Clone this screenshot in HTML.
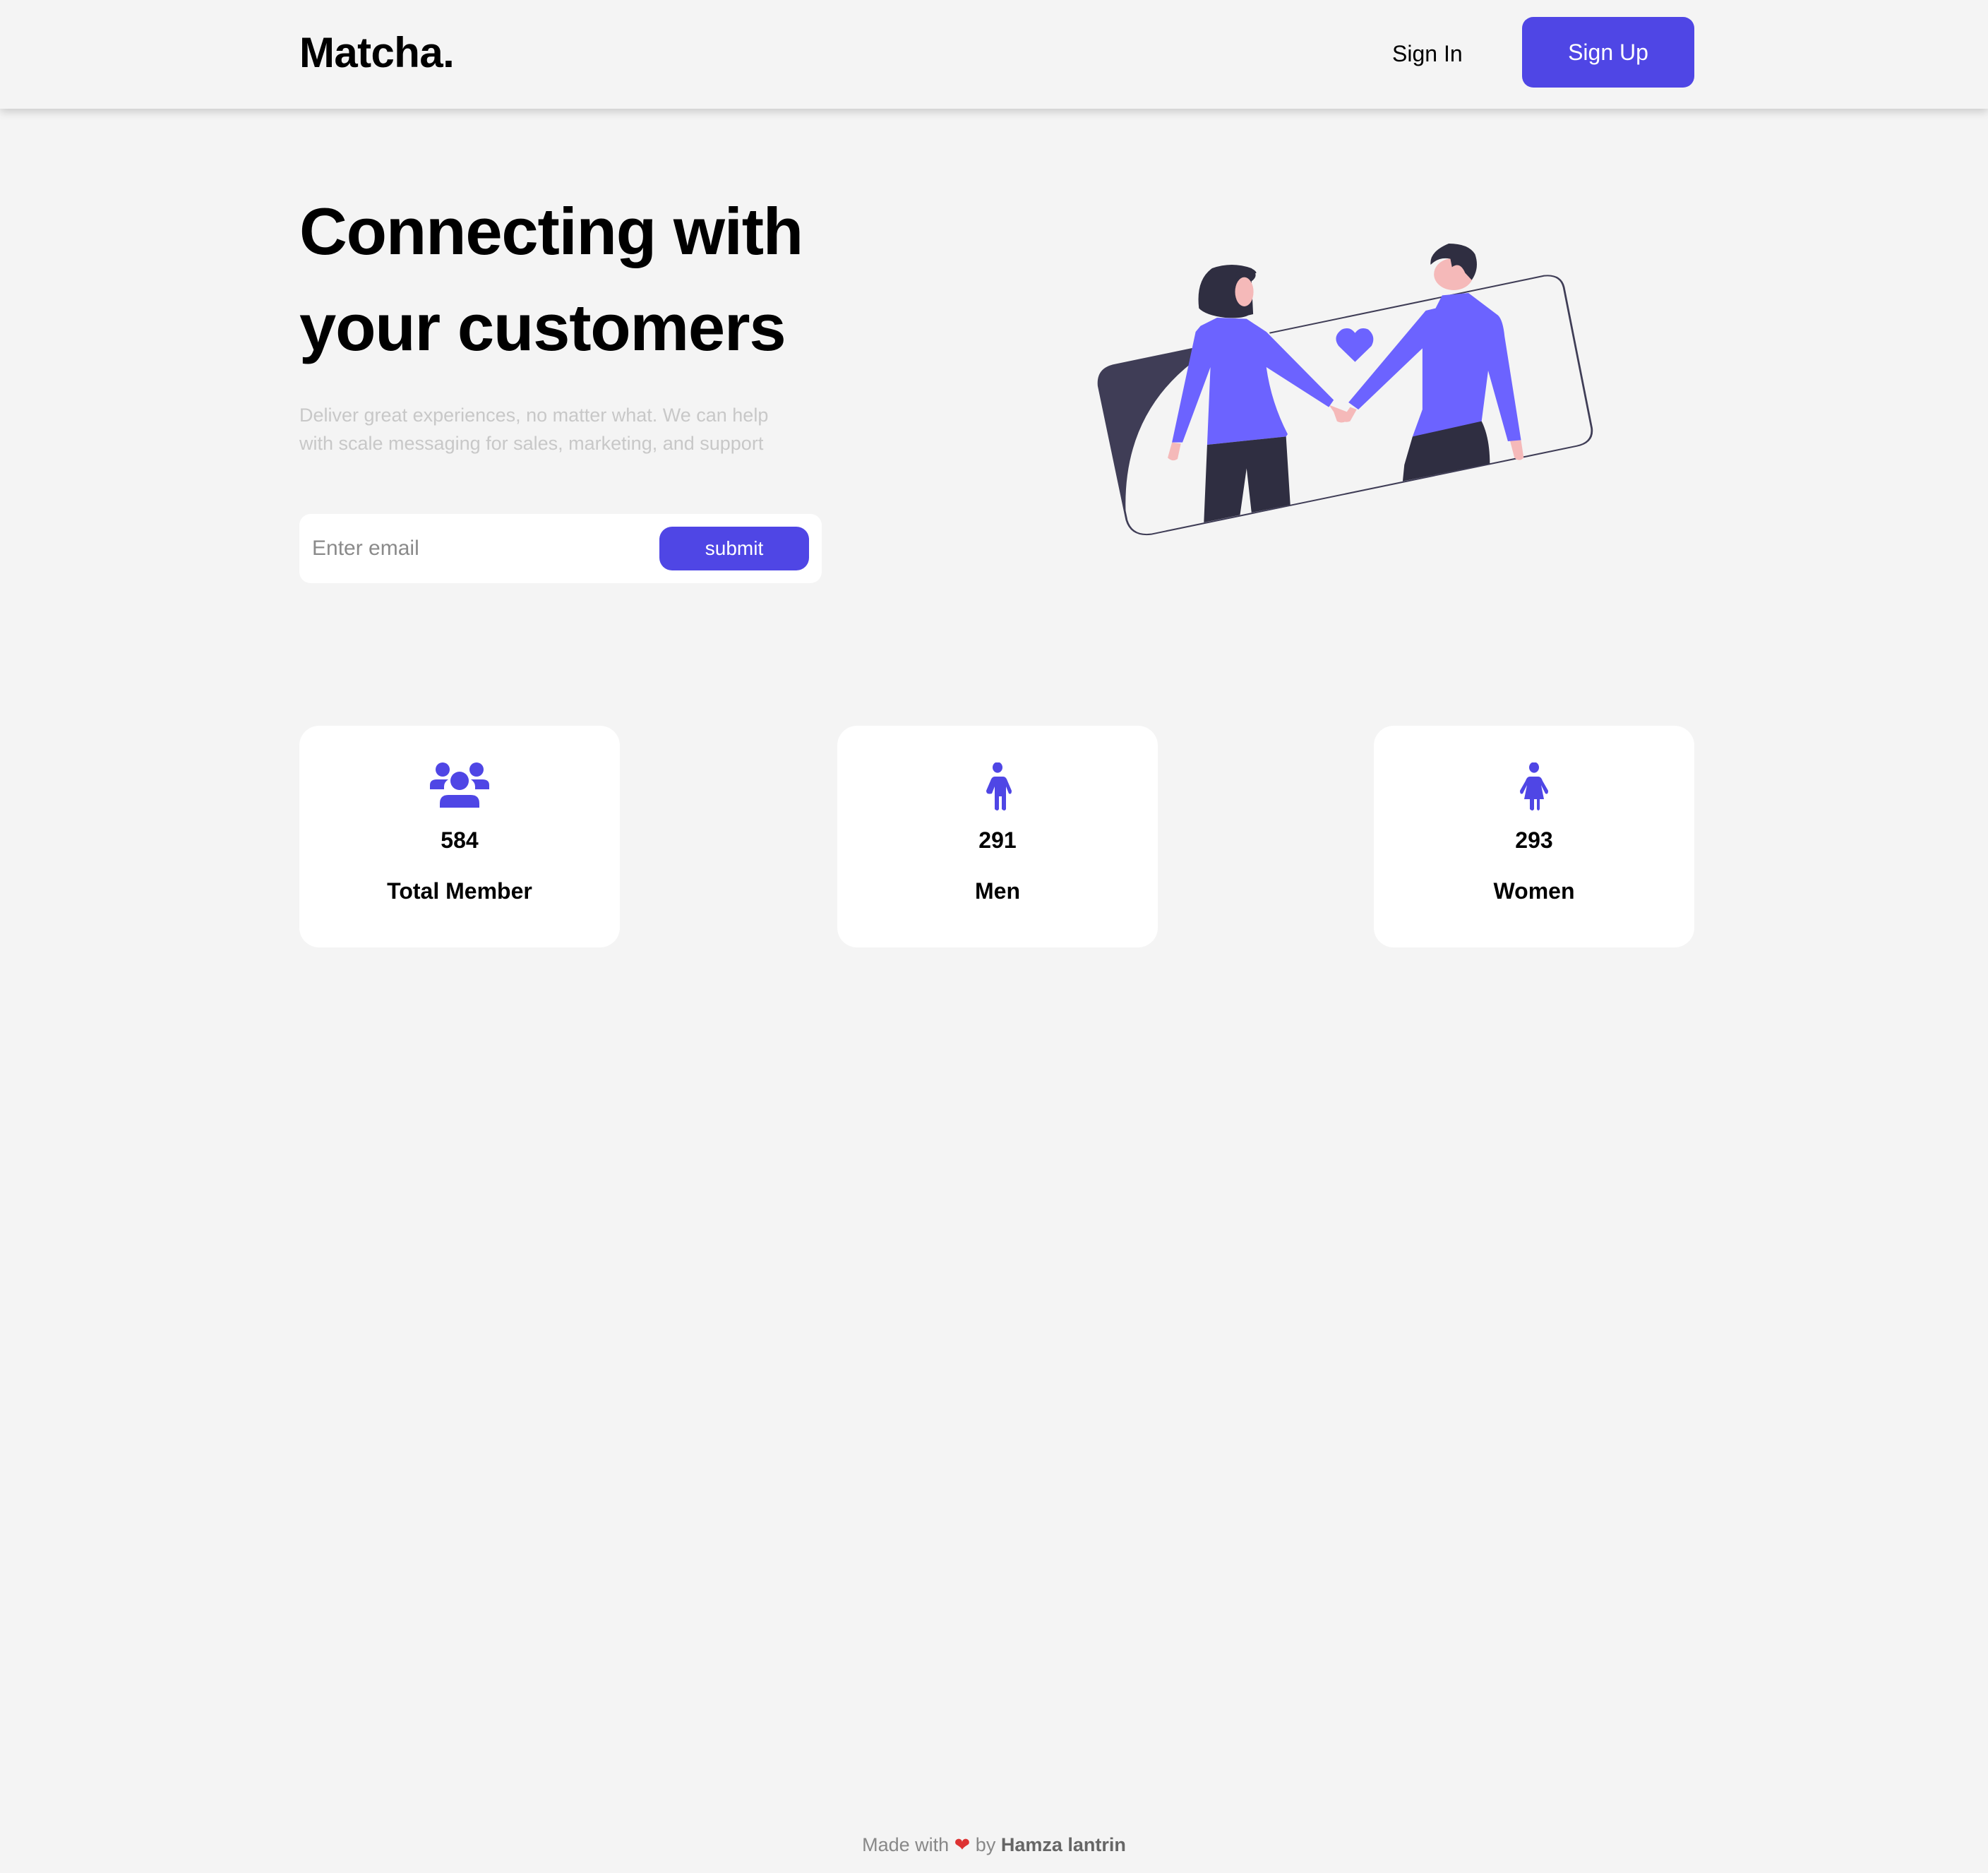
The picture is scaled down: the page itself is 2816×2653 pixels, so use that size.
<!DOCTYPE html>
<html><head><meta charset="utf-8">
<style>
html{zoom:2}
*{margin:0;padding:0;box-sizing:border-box}
body{width:1408px;height:1326px;background:#f4f4f4;font-family:"Liberation Sans",sans-serif;position:relative;overflow:hidden;color:#000}
.hdr{position:absolute;left:0;top:0;width:1408px;height:77px;background:#f4f4f4;box-shadow:0 2px 6px rgba(0,0,0,.18)}
.logo{position:absolute;left:212px;top:20px;font-size:30px;font-weight:bold;letter-spacing:-0.3px}
.signin{position:absolute;left:986px;top:29px;font-size:16px}
.signup{position:absolute;left:1078px;top:12px;width:122px;height:50px;background:#4f46e5;border-radius:8px;color:#fff;font-size:16px;text-align:center;line-height:50px}
h1{position:absolute;left:212px;top:130px;font-size:47px;line-height:68px;font-weight:bold;letter-spacing:-0.6px}
p.sub{position:absolute;left:212px;top:284px;width:350px;font-size:13.5px;line-height:20px;color:#c8c8c8}
.form{position:absolute;left:212px;top:364px;width:370px;height:49px;background:#fff;border-radius:8px}
.form span{position:absolute;left:9px;top:16px;font-size:15px;color:#8a8a8a}
.btn{position:absolute;left:255px;top:9px;width:106px;height:31px;background:#4f46e5;border-radius:9px;color:#fff;font-size:14px;text-align:center;line-height:31px}
.card{position:absolute;top:514px;width:227px;height:157px;background:#fff;border-radius:14px;text-align:center}
.card svg{position:absolute;left:50%;transform:translateX(-50%)}
.card .n{position:absolute;left:0;right:0;top:72px;font-size:16px;font-weight:bold}
.card .l{position:absolute;left:0;right:0;top:108px;font-size:16px;font-weight:bold}
.foot{position:absolute;left:0;width:1408px;top:1299px;text-align:center;font-size:13.5px;color:#888}
.foot b{color:#666}
</style></head><body>
<div class="hdr">
<div class="logo">Matcha.</div>
<div class="signin">Sign In</div>
<div class="signup">Sign Up</div>
</div>
<h1>Connecting with<br>your customers</h1>
<p class="sub">Deliver great experiences, no matter what. We can help with scale messaging for sales, marketing, and support</p>
<div class="form"><span>Enter email</span><div class="btn">submit</div></div>

<svg style="position:absolute;left:770px;top:160px" width="365" height="225" viewBox="0 0 1568 1350" preserveAspectRatio="none">
<path d="M320,522 L85,590 Q35,605 35,680 L118,1245 Q100,820 320,580Z" fill="#3f3d56"/>
<path d="M555,455 L1390,212 Q1440,205 1450,260 L1535,860 Q1540,920 1490,935 L195,1310 Q135,1320 120,1250 L35,680 Q30,605 85,590 L320,522" fill="none" stroke="#3f3d56" stroke-width="6"/>
<path d="M815,578 L765,510 Q745,470 775,440 Q800,425 815,455 Q830,425 855,440 Q880,470 865,510Z" fill="#6c63ff"/>
<path d="M340,350 Q330,230 380,180 Q440,150 500,180 Q525,210 500,235 L505,375 L490,380 Q470,395 420,390 Q360,380 340,350Z" fill="#2f2e41"/>
<ellipse cx="478" cy="280" rx="28" ry="62" fill="#f5b9b9"/>
<path d="M450,230 Q460,200 500,205 L515,200 Q510,180 480,175 Q450,180 450,230Z" fill="#2f2e41"/>
<path d="M258,920 L285,925 L275,990 Q260,1005 245,985Z" fill="#f5b9b9"/>
<path d="M735,760 L790,790 L795,820 Q780,845 760,830 L750,790Z" fill="#f5b9b9"/>
<path d="M345,425 L395,390 L485,395 L545,450 L750,740 L735,770 L545,600 Q560,750 610,885 L605,895 L365,930 L375,600 L290,920 L258,920 L330,450Z" fill="#6c63ff"/>
<path d="M365,930 L605,895 L618,1185 L500,1218 L485,1030 L465,1228 L355,1260Z" fill="#2f2e41"/>
<ellipse cx="1115" cy="205" rx="60" ry="68" fill="#f5b9b9"/>
<path d="M1045,165 Q1040,110 1100,75 Q1160,75 1180,120 Q1195,180 1170,230 L1150,200 Q1135,150 1110,175 L1105,140 Q1070,130 1045,165Z" fill="#2f2e41"/>
<path d="M1285,905 L1320,910 L1328,985 Q1315,1005 1300,985Z" fill="#f5b9b9"/>
<path d="M800,770 L820,780 L800,830 Q780,840 775,820Z" fill="#f5b9b9"/>
<path d="M1080,295 L1160,285 L1250,380 Q1265,400 1270,470 L1320,910 L1280,915 L1220,615 L1200,830 Q1100,890 990,895 L1020,780 L1020,520 L825,780 L795,750 L1030,360 L1060,350Z" fill="#6c63ff"/>
<path d="M990,895 L1200,830 Q1225,900 1225,1010 L960,1085 L965,1015Z" fill="#2f2e41"/>
</svg>

<div class="card" style="left:212px">
<svg style="top:25px" width="42" height="34" viewBox="0 0 42 34">
<circle cx="9" cy="6" r="5" fill="#4f46e5"/><circle cx="33" cy="6" r="5" fill="#4f46e5"/>
<path d="M0,17 Q0,13 5,13 L13,13 Q10,15 10,18 L10,20 L0,20Z" fill="#4f46e5"/>
<path d="M42,17 Q42,13 37,13 L29,13 Q32,15 32,18 L32,20 L42,20Z" fill="#4f46e5"/>
<circle cx="21" cy="14" r="6.5" fill="#4f46e5"/>
<path d="M7,33 L7,30 Q7,24 13,24 L29,24 Q35,24 35,30 L35,33Z" fill="#4f46e5"/>
</svg>
<div class="n">584</div><div class="l">Total Member</div></div>

<div class="card" style="left:593px">
<svg style="top:26px" width="22" height="34" viewBox="0 0 22 34">
<ellipse cx="11" cy="3.5" rx="3.5" ry="3.8" fill="#4f46e5"/>
<path d="M7,10 L15,10 Q17,10 18,13 L21,20 Q21,23 19,22 L17,17 L17,33 Q16,35 14,33 L14,24 L12,24 L12,33 Q11,35 9,33 L9,17 L7,22 Q3,23 3,20 L6,13 Q7,10 9,10Z" fill="#4f46e5"/>
</svg>
<div class="n">291</div><div class="l">Men</div></div>

<div class="card" style="left:973px">
<svg style="top:26px" width="22" height="34" viewBox="0 0 22 34">
<ellipse cx="11" cy="3.5" rx="3.5" ry="3.8" fill="#4f46e5"/>
<path d="M8,10 L14,10 Q16,10 17,13 L21,20 Q21,23 19,22 L16,16 L18,26 L15,26 L15,33 Q14,35 13,33 L13,26 L11,26 L11,33 Q10,35 8,33 L8,26 L4,26 L6,16 L3,22 Q1,23 1,20 L5,13 Q6,10 8,10Z" fill="#4f46e5"/>
</svg>
<div class="n">293</div><div class="l">Women</div></div>

<div class="foot">Made with <span style="color:#d33">&#10084;</span> by <b>Hamza lantrin</b></div>
</body></html>
